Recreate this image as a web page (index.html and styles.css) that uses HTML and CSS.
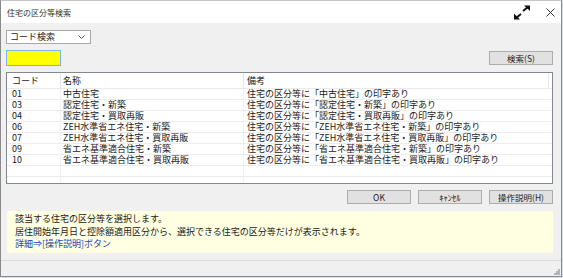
FILE: index.html
```html
<!DOCTYPE html>
<html lang="ja">
<head>
    <meta charset="UTF-8">
    <title>住宅の区分等検索</title>
    <link rel="stylesheet" href="styles.css">
</head>
<body>
    <div class="window">
        <div class="titlebar">
            <span class="title">住宅の区分等検索</span>
            <svg class="expand-icon" width="18" height="15" viewBox="0 0 18 15">
                <line x1="10" y1="6" x2="15" y2="2" stroke="#111" stroke-width="2"/>
                <polygon points="11,0.5 17,0.5 17,6" fill="#111"/>
                <line x1="8" y1="9" x2="3" y2="13" stroke="#111" stroke-width="2"/>
                <polygon points="1,8.5 1,14.5 7,14.5" fill="#111"/>
            </svg>
            <svg class="close-icon" width="9" height="9" viewBox="0 0 9 9">
                <path d="M0.5 0.5 L8.5 8.5 M8.5 0.5 L0.5 8.5" stroke="#333" stroke-width="1"/>
            </svg>
        </div>

        <div class="main">
            <div class="select">
                <span>コード検索</span>
                <svg width="7" height="4" viewBox="0 0 7 4">
                    <path d="M0.5 0.5 L3.5 3.5 L6.5 0.5" stroke="#555" fill="none"/>
                </svg>
            </div>

            <div class="search-row">
                <div class="code-input"></div>
                <button class="btn">検索(S)</button>
            </div>

            <div class="list">
                <div class="list-head">
                    <div class="cell code">コード</div>
                    <div class="cell name">名称</div>
                    <div class="cell note">備考</div>
                    <div class="cell"></div>
                </div>
                <div class="list-row">
                    <div class="cell code">01</div>
                    <div class="cell name">中古住宅</div>
                    <div class="cell note">住宅の区分等に「中古住宅」の印字あり</div>
                </div>
                <div class="list-row">
                    <div class="cell code">03</div>
                    <div class="cell name">認定住宅・新築</div>
                    <div class="cell note">住宅の区分等に「認定住宅・新築」の印字あり</div>
                </div>
                <div class="list-row">
                    <div class="cell code">04</div>
                    <div class="cell name">認定住宅・買取再販</div>
                    <div class="cell note">住宅の区分等に「認定住宅・買取再販」の印字あり</div>
                </div>
                <div class="list-row">
                    <div class="cell code">06</div>
                    <div class="cell name">ZEH水準省エネ住宅・新築</div>
                    <div class="cell note">住宅の区分等に「ZEH水準省エネ住宅・新築」の印字あり</div>
                </div>
                <div class="list-row">
                    <div class="cell code">07</div>
                    <div class="cell name">ZEH水準省エネ住宅・買取再販</div>
                    <div class="cell note">住宅の区分等に「ZEH水準省エネ住宅・買取再販」の印字あり</div>
                </div>
                <div class="list-row">
                    <div class="cell code">09</div>
                    <div class="cell name">省エネ基準適合住宅・新築</div>
                    <div class="cell note">住宅の区分等に「省エネ基準適合住宅・新築」の印字あり</div>
                </div>
                <div class="list-row">
                    <div class="cell code">10</div>
                    <div class="cell name">省エネ基準適合住宅・買取再販</div>
                    <div class="cell note">住宅の区分等に「省エネ基準適合住宅・買取再販」の印字あり</div>
                </div>
                <div class="list-row">
                    <div class="cell code"></div>
                    <div class="cell name"></div>
                    <div class="cell note"></div>
                </div>
                <div class="list-row">
                    <div class="cell code"></div>
                    <div class="cell name"></div>
                    <div class="cell note"></div>
                </div>
            </div>

            <div class="actions">
                <button class="btn">OK</button>
                <button class="btn">ｷｬﾝｾﾙ</button>
                <button class="btn">操作説明(H)</button>
            </div>

            <div class="hint">
                <p>該当する住宅の区分等を選択します。</p>
                <p>居住開始年月日と控除額適用区分から、選択できる住宅の区分等だけが表示されます。</p>
                <p class="hint-link">詳細⇒[操作説明]ボタン</p>
            </div>
        </div>

        <div class="statusbar">
            <svg class="grip" width="7" height="7" viewBox="0 0 7 7">
                <rect x="5" y="1" width="2" height="2" fill="#b5b5b5"/>
                <rect x="3" y="3" width="2" height="2" fill="#b5b5b5"/>
                <rect x="5" y="3" width="2" height="2" fill="#b5b5b5"/>
                <rect x="1" y="5" width="2" height="2" fill="#b5b5b5"/>
                <rect x="3" y="5" width="2" height="2" fill="#b5b5b5"/>
                <rect x="5" y="5" width="2" height="2" fill="#b5b5b5"/>
            </svg>
        </div>
    </div>
</body>
</html>
```

FILE: styles.css
```css
* {
    margin: 0;
    padding: 0;
    box-sizing: border-box;
}

body {
    width: 563px;
    height: 278px;
    overflow: hidden;
    background: #d8dde6;
    font-family: "Noto Sans CJK JP", "Noto Sans", sans-serif;
    font-size: 9px;
    color: #1a1a1a;
}

.window {
    width: 562px;
    height: 277px;
    display: flex;
    flex-direction: column;
    background: #f0f0f0;
    border: 1px solid #8a8a8a;
    border-top-color: #c4c4c4;
}

.titlebar {
    height: 22px;
    display: flex;
    align-items: center;
    background: #fff;
    padding-left: 6px;
}

.title {
    font-size: 8px;
    color: #333;
    flex: 1;
}

.expand-icon {
    margin-right: 15px;
    margin-top: 1px;
}

.close-icon {
    margin-right: 6px;
}

.main {
    display: flex;
    flex-direction: column;
    padding: 7px 8px 0 5px;
}

.select {
    width: 85px;
    height: 14px;
    display: flex;
    align-items: center;
    justify-content: space-between;
    padding: 0 5px 0 3px;
    background: #fff;
    border: 1px solid #a8a8a8;
    line-height: 12px;
}

.search-row {
    height: 16px;
    margin-top: 6px;
    display: flex;
    align-items: center;
    justify-content: space-between;
}

.code-input {
    width: 55px;
    height: 16px;
    background: #ffff00;
    border: 1px solid #7fb2e6;
}

.btn {
    width: 64px;
    height: 14px;
    background: #e1e1e1;
    border: 1px solid #adadad;
    font-family: inherit;
    font-size: 8.5px;
    line-height: 12px;
    color: #1a1a1a;
}

.list {
    height: 112px;
    margin-top: 6px;
    overflow: hidden;
    background: #fff;
    border: 1px solid #828790;
}

.list-head,
.list-row {
    display: grid;
    grid-template-columns: 54px 183px 305px 1fr;
}

.list-head {
    height: 16px;
    align-items: center;
    border-bottom: 1px solid #eaeaea;
}

.list-head .cell {
    height: 16px;
    line-height: 15px;
    border-right: 1px solid #e5e5e5;
}

.list-head .cell:last-child {
    border-right: none;
}

.list-row {
    grid-template-columns: 54px 183px 1fr;
    height: 11px;
    border-bottom: 1px solid #ececec;
}

.list-row .cell {
    line-height: 10px;
    white-space: nowrap;
    border-right: 1px solid #f2f2f2;
}

.list-row .cell:last-child {
    border-right: none;
}

.cell.code {
    padding-left: 5px;
}

.cell.name {
    padding-left: 2px;
}

.cell.note {
    padding-left: 3px;
}

.actions {
    margin-top: 6px;
    display: flex;
    justify-content: flex-end;
    gap: 7px;
}

.hint {
    height: 42px;
    margin: 7px 0 0 1px;
    padding: 2px 0 0 8px;
    background: #ffffe1;
    line-height: 12.5px;
}

.hint-link {
    color: #1f3fb8;
}

.statusbar {
    margin-top: auto;
    height: 16px;
    border-top: 1px solid #dadada;
    display: flex;
    justify-content: flex-end;
    align-items: flex-end;
    padding: 0 1px 1px 0;
}
```
